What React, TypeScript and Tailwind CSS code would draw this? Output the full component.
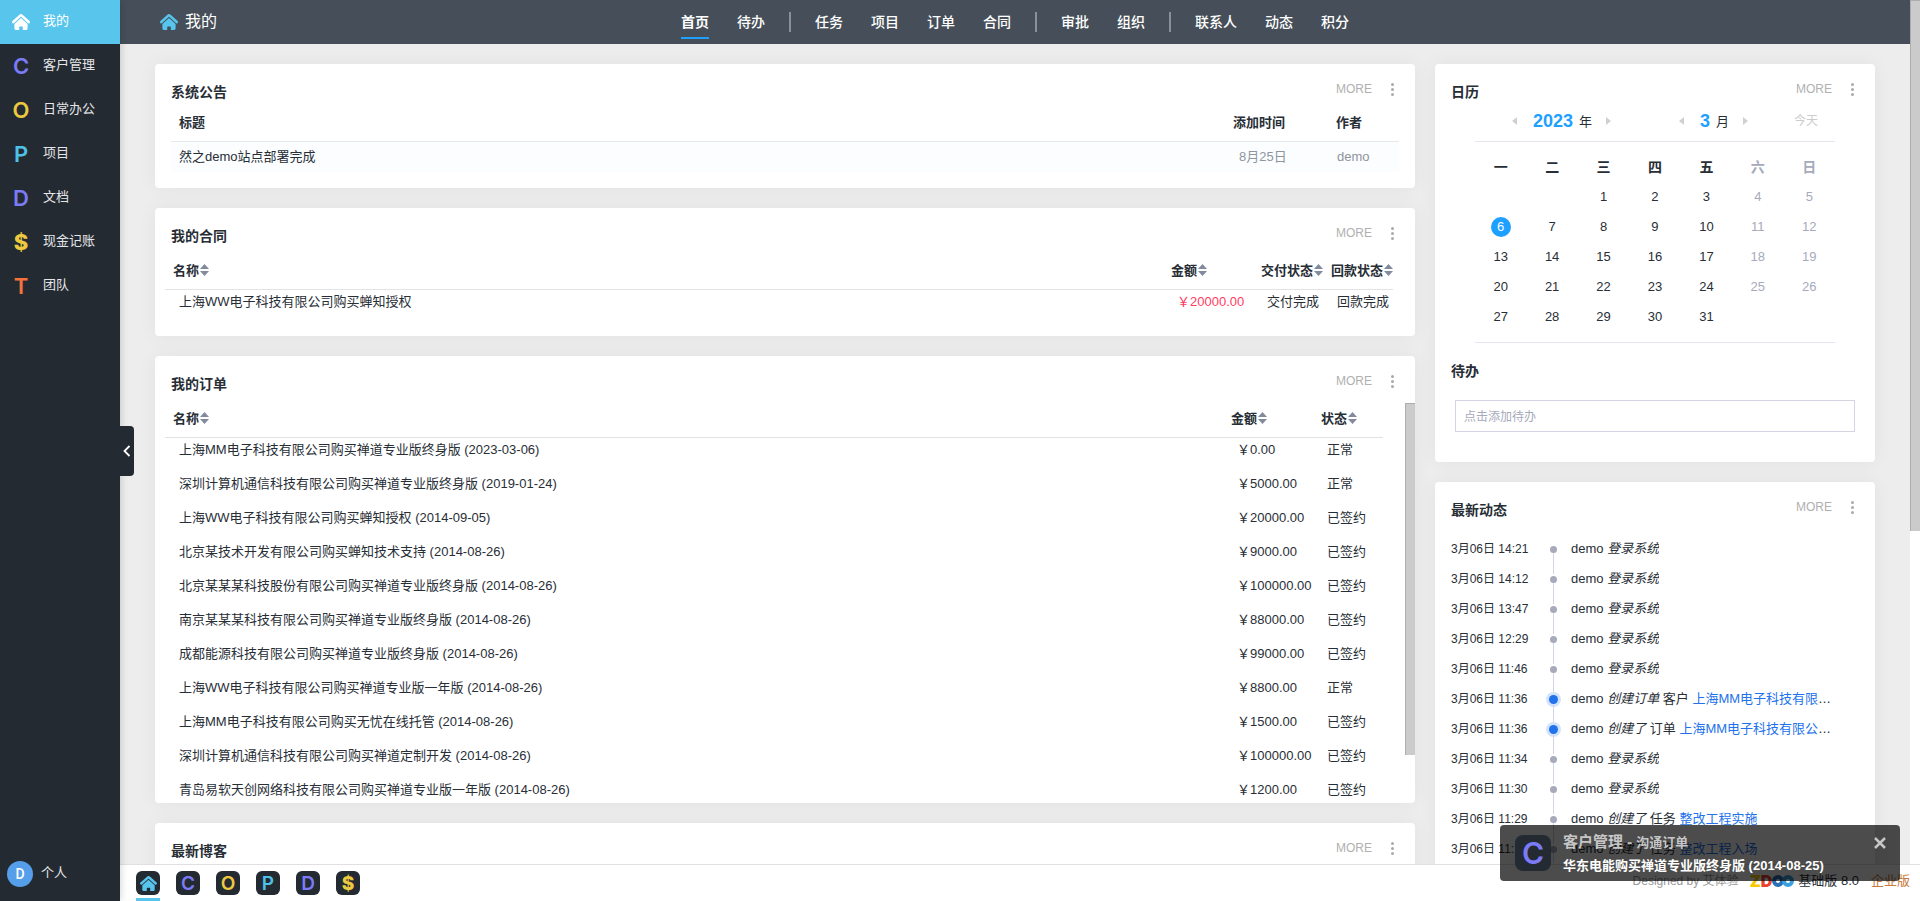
import React, { useState } from 'react';
import clsx from 'clsx';

interface AppEntry {
  key: string;
  name: string;
  glyph: string;
  color: string;
}

interface Order {
  name: string;
  amount: string;
  status: string;
}

interface Activity {
  time: string;
  action: string;
  object?: string;
  link?: string;
  highlight?: boolean;
}

const apps: AppEntry[] = [
  { key: 'home', name: '我的', glyph: '', color: 'text-[#58c5ec]' },
  { key: 'crm', name: '客户管理', glyph: 'C', color: 'text-[#7c7bf7]' },
  { key: 'oa', name: '日常办公', glyph: 'O', color: 'text-[#ecc93f]' },
  { key: 'proj', name: '项目', glyph: 'P', color: 'text-[#4dc1e8]' },
  { key: 'doc', name: '文档', glyph: 'D', color: 'text-[#7c7bf7]' },
  { key: 'cash', name: '现金记账', glyph: '$', color: 'text-[#ecc93f]' },
  { key: 'team', name: '团队', glyph: 'T', color: 'text-[#f5733a]' }
];

const navGroups = [
  ['首页', '待办'],
  ['任务', '项目', '订单', '合同'],
  ['审批', '组织'],
  ['联系人', '动态', '积分']
];

const orders: Order[] = [
  { name: '上海MM电子科技有限公司购买禅道专业版终身版 (2023-03-06)', amount: '￥0.00', status: '正常' },
  { name: '深圳计算机通信科技有限公司购买禅道专业版终身版 (2019-01-24)', amount: '￥5000.00', status: '正常' },
  { name: '上海WW电子科技有限公司购买蝉知授权 (2014-09-05)', amount: '￥20000.00', status: '已签约' },
  { name: '北京某技术开发有限公司购买蝉知技术支持 (2014-08-26)', amount: '￥9000.00', status: '已签约' },
  { name: '北京某某某科技股份有限公司购买禅道专业版终身版 (2014-08-26)', amount: '￥100000.00', status: '已签约' },
  { name: '南京某某某科技有限公司购买禅道专业版终身版 (2014-08-26)', amount: '￥88000.00', status: '已签约' },
  { name: '成都能源科技有限公司购买禅道专业版终身版 (2014-08-26)', amount: '￥99000.00', status: '已签约' },
  { name: '上海WW电子科技有限公司购买禅道专业版一年版 (2014-08-26)', amount: '￥8800.00', status: '正常' },
  { name: '上海MM电子科技有限公司购买无忧在线托管 (2014-08-26)', amount: '￥1500.00', status: '已签约' },
  { name: '深圳计算机通信科技有限公司购买禅道定制开发 (2014-08-26)', amount: '￥100000.00', status: '已签约' },
  { name: '青岛易软天创网络科技有限公司购买禅道专业版一年版 (2014-08-26)', amount: '￥1200.00', status: '已签约' }
];

const activities: Activity[] = [
  { time: '14:21', action: '登录系统' },
  { time: '14:12', action: '登录系统' },
  { time: '13:47', action: '登录系统' },
  { time: '12:29', action: '登录系统' },
  { time: '11:46', action: '登录系统' },
  { time: '11:36', action: '创建订单', object: '客户', link: '上海MM电子科技有限公司', highlight: true },
  { time: '11:36', action: '创建了', object: '订单', link: '上海MM电子科技有限公司购买禅道', highlight: true },
  { time: '11:34', action: '登录系统' },
  { time: '11:30', action: '登录系统' },
  { time: '11:29', action: '创建了', object: '任务', link: '整改工程实施' },
  { time: '11:29', action: '创建了', object: '任务', link: '整改工程入场' }
];

const weekdays = ['一', '二', '三', '四', '五', '六', '日'];

// March 2023 starts on a Wednesday
const weeks = Array.from({ length: 5 }, (_, week) =>
  weekdays.map((_, day) => {
    const date = week * 7 + day - 1;
    return date >= 1 && date <= 31 ? date : null;
  })
);

const HomeIcon: React.FC<{ className?: string }> = ({ className }) => (
  <svg viewBox="0 0 18 16" className={className} fill="currentColor" aria-hidden="true">
    <path d="M1.300 8 8 1.900a1.500 1.500 0 0 1 2 0l6.700 6.100" fill="none" stroke="currentColor" strokeWidth="2.600" strokeLinecap="round" />
    <path d="M9 4 15.600 9.900v4.700a1.400 1.400 0 0 1-1.400 1.400h-3.400v-3a.6.6 0 0 0-.6-.6H7.800a.6.6 0 0 0-.6.6v3H3.800a1.400 1.400 0 0 1-1.400-1.400V9.900Z" />
  </svg>
);

const AppGlyph: React.FC<{ app: AppEntry; size: 'sm' | 'md' | 'lg' }> = ({ app, size }) => {
  if (app.key === 'home') {
    return <HomeIcon className={size === 'md' ? 'h-4 w-[18px]' : 'h-[15px] w-[17px]'} />;
  }
  return (
    <span
      className={clsx(
        "font-['Inter',sans-serif] leading-none",
        app.key === 'cash' ? 'font-extrabold' : 'font-semibold',
        size === 'sm' && 'text-[19px]',
        size === 'md' && 'text-[22px]',
        size === 'lg' && 'text-[30px]'
      )}
    >
      {app.glyph}
    </span>
  );
};

const SortIcon = () => (
  <svg viewBox="0 0 9 12" className="ml-px inline-block h-3 w-[9px] align-[-1px]" fill="#838a9d" aria-hidden="true">
    <path d="M4.500 0 9 5H0ZM0 7h9L4.500 12Z" />
  </svg>
);

const Arrow: React.FC<{ label: string; next?: boolean }> = ({ label, next }) => (
  <button type="button" aria-label={label} className="text-[#d0d0d0]">
    <svg viewBox="0 0 5 8" className="h-2 w-[5px]" fill="currentColor" aria-hidden="true">
      <path d={next ? 'M0 0 5 4 0 8Z' : 'M5 0 0 4 5 8Z'} />
    </svg>
  </button>
);

interface PanelProps {
  title: string;
  className?: string;
  children?: React.ReactNode;
}

const Panel: React.FC<PanelProps> = ({ title, className, children }) => (
  <section className={clsx('rounded bg-white shadow-[0_0_20px_rgba(0,0,0,0.05)]', className)}>
    <header className="flex h-[41px] items-start justify-between pr-5 pl-4">
      <h2 className="pt-[18px] text-sm leading-5 font-bold">{title}</h2>
      <div className="flex items-center gap-[17px] pt-[15px] text-xs leading-5 text-[#b0b0b0]">
        <a href="#more">MORE</a>
        <button type="button" aria-label="更多操作" className="flex w-[6px] flex-col items-center gap-[2px]">
          <span className="size-[3px] rounded-full bg-[#aaa]" />
          <span className="size-[3px] rounded-full bg-[#aaa]" />
          <span className="size-[3px] rounded-full bg-[#aaa]" />
        </button>
      </div>
    </header>
    {children}
  </section>
);

const SortableTh: React.FC<{ label: string; className?: string }> = ({ label, className }) => (
  <th scope="col" className={clsx('h-[37px] border-b border-[#e3e3e5] pl-2 text-left font-bold whitespace-nowrap', className)}>
    {label}
    <SortIcon />
  </th>
);

const cell = 'h-[34px] pt-[2px] pb-3 pl-[14px] leading-5 whitespace-nowrap';

const Sidebar = () => (
  <aside className="relative z-10 flex w-[120px] shrink-0 flex-col bg-[#242a32] text-[#e4e6e9] shadow-[0_0_8px_rgba(0,0,0,0.2)]">
    <nav>
      {apps.map((app) => (
        <a
          key={app.key}
          href={`#${app.key}`}
          className={clsx('flex h-11 items-center gap-[10px] pl-[9px]', app.key === 'home' && 'bg-[#58c5ec] text-white')}
        >
          <span className={clsx('flex w-6 justify-center', app.key !== 'home' && app.color)}>
            <AppGlyph app={app} size="md" />
          </span>
          <span className="pb-[2px]">{app.name}</span>
        </a>
      ))}
    </nav>
    <a href="#profile" className="mt-auto mb-[14px] flex items-center gap-2 pl-[7px]">
      <span className="flex size-[26px] items-center justify-center rounded-full bg-[#559fea] font-['Roboto',sans-serif] text-sm font-medium text-white">D</span>
      <span className="pb-[2px]">个人</span>
    </a>
    <button
      type="button"
      aria-label="收起菜单"
      className="absolute top-[426px] left-full flex h-[50px] w-[14px] items-center justify-center rounded-r bg-[#242a32]"
    >
      <svg viewBox="0 0 8 12" className="h-3 w-2" fill="none" stroke="#fff" strokeWidth="1.800" aria-hidden="true">
        <path d="M6.500 1 1.500 6l5 5" />
      </svg>
    </button>
  </aside>
);

const TopBar = () => (
  <header className="flex h-11 shrink-0 items-center bg-[#464f59] text-white">
    <div className="flex-1">
      <div className="flex items-center gap-[7px] pl-10 text-base">
        <HomeIcon className="h-4 w-[18px] text-[#58c5ec]" />
        <span className="leading-5">我的</span>
      </div>
    </div>
    <nav className="flex items-center text-sm leading-5">
      {navGroups.map((group, index) => (
        <React.Fragment key={group[0]}>
          {index > 0 && <span className="mx-[10px] h-5 w-[2px] bg-[#8a9098]" />}
          {group.map((item) => (
            <a key={item} href={`#${item}`} className="px-[14px]">
              <span
                className={clsx(
                  'block border-b-2 pt-[6px] pb-[5px]',
                  item === '首页' ? 'border-[#1ea0ff] font-bold' : 'border-transparent font-medium'
                )}
              >
                {item}
              </span>
            </a>
          ))}
        </React.Fragment>
      ))}
    </nav>
    <div className="flex-1" />
  </header>
);

const NoticePanel = () => (
  <Panel title="系统公告" className="pb-4">
    <div className="px-4">
      <table className="w-full table-fixed border-separate border-spacing-0 text-left">
        <thead>
          <tr className="[&>th]:h-[37px] [&>th]:border-b [&>th]:border-[#e5e9eb] [&>th]:pl-2">
            <th scope="col">标题</th>
            <th scope="col" className="w-[103px]">添加时间</th>
            <th scope="col" className="w-[71px]">作者</th>
          </tr>
        </thead>
        <tbody>
          <tr className="bg-[#fbfdff] [&>td]:h-[30px]">
            <td className="pl-2"><a href="#notice">然之demo站点部署完成</a></td>
            <td className="pl-[14px] text-[#8e959c]">8月25日</td>
            <td className="pl-[9px] text-[#8e959c]">demo</td>
          </tr>
        </tbody>
      </table>
    </div>
  </Panel>
);

const ContractPanel = () => (
  <Panel title="我的合同" className="pb-3">
    <div className="pt-1 pr-[22px] pl-[10px]">
      <table className="w-full table-fixed border-separate border-spacing-0">
        <thead>
          <tr>
            <SortableTh label="名称" />
            <SortableTh label="金额" className="w-[90px]" />
            <SortableTh label="交付状态" className="w-[70px]" />
            <SortableTh label="回款状态" className="w-[70px]" />
          </tr>
        </thead>
        <tbody>
          <tr>
            <td className={cell}>上海WW电子科技有限公司购买蝉知授权</td>
            <td className={clsx(cell, 'text-[#ff3c5f]')}>￥20000.00</td>
            <td className={cell}>交付完成</td>
            <td className={cell}>回款完成</td>
          </tr>
        </tbody>
      </table>
    </div>
  </Panel>
);

const OrderPanel = () => (
  <Panel title="我的订单" className="flex h-[447px] flex-col overflow-hidden">
    <div className="flex min-h-0 flex-1 items-start">
      <div className="flex-1 pt-1 pr-[22px] pl-[10px]">
        <table className="w-full table-fixed border-separate border-spacing-0">
          <thead>
            <tr>
              <SortableTh label="名称" />
              <SortableTh label="金额" className="w-[90px]" />
              <SortableTh label="状态" className="w-[70px]" />
            </tr>
          </thead>
          <tbody>
            {orders.map((order) => (
              <tr key={order.name}>
                <td className={cell}>{order.name}</td>
                <td className={cell}>{order.amount}</td>
                <td className={cell}>{order.status}</td>
              </tr>
            ))}
          </tbody>
        </table>
      </div>
      <div className="mt-[6px] h-[352px] w-[10px] border-t border-l border-[#adadad] bg-[#cbcbcb]" />
    </div>
  </Panel>
);

const CalendarPanel = () => {
  const [todo, setTodo] = useState('');

  return (
    <Panel title="日历" className="pb-[30px]">
      <div className="mx-10 border-b border-[#e6e6f0] pb-[10px]">
        <div className="flex h-[37px] items-center border-b border-[#e6e6f0] pr-[17px] pb-1 pl-[37px]">
          <Arrow label="上一年" />
          <strong className="ml-4 text-lg leading-6 text-[#1ea0ff]">2023</strong>
          <span className="mr-[14px] ml-[6px] pt-[2px]">年</span>
          <Arrow label="下一年" next />
          <span className="flex-1" />
          <Arrow label="上个月" />
          <strong className="ml-4 text-lg leading-6 text-[#1ea0ff]">3</strong>
          <span className="mr-[14px] ml-[6px] pt-[2px]">月</span>
          <Arrow label="下个月" next />
          <button type="button" className="ml-[46px] text-xs text-[#ccc]">今天</button>
        </div>
        <table className="w-full table-fixed border-separate border-spacing-0 text-center">
          <thead>
            <tr>
              {weekdays.map((day, index) => (
                <th key={day} scope="col" className={clsx('h-10 pt-[10px] text-sm font-bold', index > 4 && 'text-[#a6aabb]')}>
                  {day}
                </th>
              ))}
            </tr>
          </thead>
          <tbody>
            {weeks.map((week, row) => (
              <tr key={row}>
                {week.map((date, index) => (
                  <td key={index} className={clsx('h-[30px]', index > 4 && 'text-[#a6aabb]')}>
                    <span className={clsx('mx-auto block size-5 leading-5', date === 6 && 'rounded-full bg-[#1ea0ff] text-white')}>
                      {date}
                    </span>
                  </td>
                ))}
              </tr>
            ))}
          </tbody>
        </table>
      </div>
      <div className="px-4 pt-[18px]">
        <label htmlFor="todo" className="block text-sm leading-5 font-bold">待办</label>
        <div className="px-1 pt-[19px]">
          <input
            id="todo"
            type="text"
            value={todo}
            onChange={(event) => setTodo(event.target.value)}
            placeholder="点击添加待办"
            className="block h-8 w-full border border-[#d3d6e2] px-2 pt-[2px] text-xs placeholder:text-[#a6aabb]"
          />
        </div>
      </div>
    </Panel>
  );
};

const ActivityPanel = () => (
  <Panel title="最新动态" className="pb-5">
    <ul className="px-4 pt-[10px]">
      {activities.map((item, index) => (
        <li key={index} className="flex h-[30px]">
          <time className="w-[97px] shrink-0 text-xs leading-8">3月06日 {item.time}</time>
          <span className="flex w-[11px] shrink-0 flex-col items-center">
            <span className={clsx('mb-[2px] w-px', item.highlight ? 'h-[10px]' : 'h-[11px]', index > 0 && 'bg-[#d3d6e2]')} />
            <span
              className={clsx(
                'shrink-0 rounded-full',
                item.highlight ? 'size-[9px] bg-[#2272eb] ring-3 ring-[#d3e3fd]' : 'size-[7px] bg-[#a6aabb]'
              )}
            />
            <span className="w-px flex-1 bg-[#d3d6e2]" />
          </span>
          <p className="mr-4 ml-3 h-8 truncate leading-8">
            demo <em>{item.action}</em>
            {item.object && ` ${item.object} `}
            {item.link && <a href="#detail" className="text-[#2272eb]">{item.link}</a>}
          </p>
        </li>
      ))}
    </ul>
  </Panel>
);

const Taskbar = () => (
  <footer className="flex h-[37px] shrink-0 items-start border-t border-[#e0e0e0] bg-white pr-[10px] pl-4">
    <div className="flex gap-4 pt-[6px]">
      {apps.slice(0, 6).map((app) => (
        <a
          key={app.key}
          href={`#${app.key}`}
          aria-label={app.name}
          className={clsx('h-[30px] border-b-3', app.key === 'home' ? 'border-[#58c5ec]' : 'border-transparent')}
        >
          <span className={clsx('flex size-6 items-center justify-center rounded-md bg-[#242a32]', app.color)}>
            <AppGlyph app={app} size="sm" />
          </span>
        </a>
      ))}
    </div>
    <div className="ml-auto flex items-center pt-[6px] leading-5">
      <span className="text-xs leading-5 text-[#999]">Designed by 艾体验</span>
      <a href="#zdoo" aria-label="ZDOO" className="mr-1 ml-[11px] flex h-5 items-center font-['Inter',sans-serif] text-base leading-5 font-black">
        <span className="text-[#fbc800]">Z</span>
        <span className="text-[#e8432c]">D</span>
        <svg viewBox="0 0 22 14" className="h-[14px] w-[22px]" fill="none" strokeWidth="4" aria-hidden="true">
          <circle cx="6" cy="7" r="4" stroke="#2b6fb5" />
          <circle cx="16" cy="7" r="4" stroke="#3aa0e0" />
        </svg>
      </a>
      <a href="#edition">基础版 8.0</a>
      <a href="#enterprise" className="ml-3 text-[#c97a3d]">企业版</a>
    </div>
  </footer>
);

const Toast: React.FC<{ onClose: () => void }> = ({ onClose }) => (
  <div role="alert" className="absolute right-5 bottom-5 z-20 flex h-14 w-[400px] items-center rounded bg-black/70 pl-[15px] font-bold">
    <span className={clsx('flex size-9 items-center justify-center rounded-lg bg-[#242a32]', apps[1].color)}>
      <AppGlyph app={apps[1]} size="lg" />
    </span>
    <div className="ml-3 flex-1">
      <p className="leading-6 text-[#c6c6c6]">
        <span className="text-[15px]">客户管理 - </span>沟通订单
      </p>
      <p className="leading-[22px] text-white">华东电能购买禅道专业版终身版 (2014-08-25)</p>
    </div>
    <button type="button" aria-label="关闭" onClick={onClose} className="mt-2 mr-[10px] self-start text-[#c6c6c6]">
      <svg viewBox="0 0 12 12" className="m-1 size-3" fill="none" stroke="currentColor" strokeWidth="2.500" aria-hidden="true">
        <path d="m1 1 10 10M11 1 1 11" />
      </svg>
    </button>
  </div>
);

const App = () => {
  const [toastOpen, setToastOpen] = useState(true);

  return (
    <div className="relative flex h-screen overflow-hidden bg-[#ededed] font-['Liberation_Sans','Noto_Sans_CJK_SC',sans-serif] text-[13px] leading-5 text-[#282e36]">
      <Sidebar />
      <div className="flex min-w-0 flex-1 flex-col">
        <div className="flex min-h-0 flex-1">
          <div className="flex min-w-0 flex-1 flex-col">
            <TopBar />
            <main className="flex min-h-0 flex-1 items-start gap-5 overflow-hidden px-[35px] pt-5">
              <div className="flex min-w-0 flex-1 flex-col gap-5">
                <NoticePanel />
                <ContractPanel />
                <OrderPanel />
                <Panel title="最新博客" className="h-[200px]" />
              </div>
              <div className="flex w-[440px] shrink-0 flex-col gap-5">
                <CalendarPanel />
                <ActivityPanel />
              </div>
            </main>
          </div>
          <div className="w-[10px] bg-white">
            <div className="h-[531px] border-t border-l border-[#adadad] bg-[#cbcbcb]" />
          </div>
        </div>
        <Taskbar />
      </div>
      {toastOpen && <Toast onClose={() => setToastOpen(false)} />}
    </div>
  );
};

export default App;
